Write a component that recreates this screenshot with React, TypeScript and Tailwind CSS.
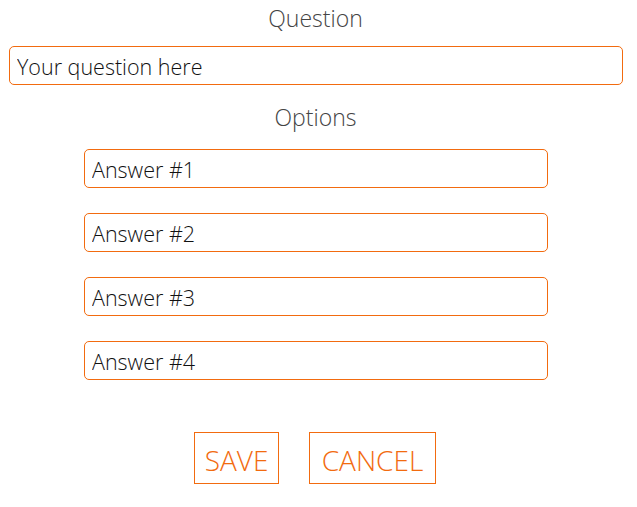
const answers = ["Answer #1", "Answer #2", "Answer #3", "Answer #4"];

const font = { fontFamily: '"Open Sans", "Noto Sans", sans-serif' };

export default function App() {
  return (
    <div className="h-[507px] w-[637px] bg-white text-[#222]" style={font}>
      <div className="h-[36px] pr-[6px] text-center text-[23px] font-light leading-[36px] text-[#444]">
        Question
      </div>
      <input
        className="ml-[9px] mt-[10px] block h-[39px] w-[614px] rounded-[5px] border border-[#f26b0f] px-[7px] pt-[2px] text-[21.5px] font-light text-[#111] outline-none"
        defaultValue="Your question here"
      />
      <div className="mt-[14px] h-[36px] pr-[6px] text-center text-[23px] font-light leading-[36px] text-[#444]">
        Options
      </div>
      <div className="mt-[14px] flex flex-col gap-[25px]">
        {answers.map((a) => (
          <input
            key={a}
            className="ml-[84px] block h-[39px] w-[464px] rounded-[5px] border border-[#f26b0f] px-[7px] pt-[2px] text-[21.5px] font-light text-[#111] outline-none"
            defaultValue={a}
          />
        ))}
      </div>
      <div className="mt-[52px] flex justify-center gap-[30px] pr-[7px]">
        <button className="h-[52px] w-[85px] border border-[#f26b0f] pt-[3px] text-[28px] font-light text-[#f26b0f]">
          SAVE
        </button>
        <button className="h-[52px] w-[127px] border border-[#f26b0f] pt-[3px] text-[28px] font-light text-[#f26b0f]">
          CANCEL
        </button>
      </div>
    </div>
  );
}
